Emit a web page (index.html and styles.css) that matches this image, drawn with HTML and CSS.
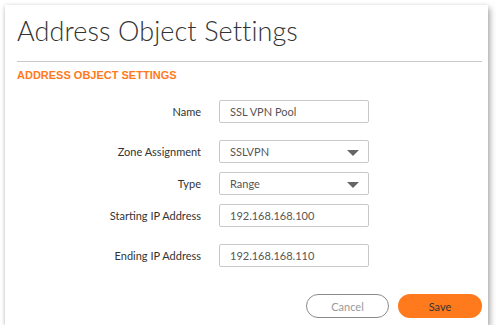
FILE: index.html
```html
<!DOCTYPE html>
<html>
  <head>
    <meta charset="UTF-8" />
    <title>Address Object Settings</title>
    <link rel="stylesheet" href="styles.css">
  </head>
  <body>
    <div class="dialog">
      <h1 class="title">Address Object Settings</h1>
      <hr class="divider" />
      <h3 class="section">ADDRESS OBJECT SETTINGS</h3>

      <div class="form">
        <div class="row">
          <label>Name</label>
          <div class="field">SSL VPN Pool</div>
        </div>
        <div class="row gap-lg">
          <label>Zone Assignment</label>
          <div class="field select">SSLVPN<span class="caret"></span></div>
        </div>
        <div class="row">
          <label>Type</label>
          <div class="field select">Range<span class="caret"></span></div>
        </div>
        <div class="row">
          <label>Starting IP Address</label>
          <div class="field">192.168.168.100</div>
        </div>
        <div class="row gap-lg">
          <label>Ending IP Address</label>
          <div class="field">192.168.168.110</div>
        </div>
      </div>

      <div class="buttons">
        <button class="btn cancel">Cancel</button>
        <button class="btn save">Save</button>
      </div>
    </div>
  </body>
</html>
```

FILE: styles.css
```css
* {
  padding: 0px;
  margin: 0px;
  box-sizing: border-box;
}

body {
  --orange: #ff7a1c;
  --text: #333333;
  --line: #c8c8c8;
  background: #ffffff;
  font-family: Lato, "Open Sans", Arial, sans-serif;
  color: var(--text);
}

.dialog {
  width: 483px;
  height: 320px;
  margin: 5px 0px 0px 5px;
  background: #ffffff;
  box-shadow: 2px 3px 6px rgba(0, 0, 0, 0.35), -1px 0px 3px rgba(0, 0, 0, 0.08);
  padding: 10px 6px 0px 12px;
}

.title {
  font-weight: 300;
  font-size: 27px;
  line-height: 32px;
  color: #333333;
  letter-spacing: 0.1px;
}

.divider {
  border: none;
  border-top: 1px solid var(--line);
  margin-top: 14px;
}

.section {
  font-family: "Liberation Sans", Arial, sans-serif;
  font-size: 11px;
  font-weight: 700;
  color: var(--orange);
  margin-top: 6px;
  line-height: 14px;
}

.form {
  display: flex;
  flex-direction: column;
  gap: 9px;
  margin-top: 18px;
}

.row {
  display: grid;
  grid-template-columns: 184px 150px;
  column-gap: 18px;
  align-items: center;
  height: 23px;
}

.row.gap-lg {
  margin-top: 8px;
}

.row label {
  text-align: right;
  font-size: 11px;
  line-height: 13px;
  color: #333333;
}

.field {
  height: 23px;
  border: 1px solid #c9c9c9;
  border-radius: 2px;
  font-size: 11px;
  color: #555555;
  padding-left: 10px;
  display: flex;
  align-items: center;
  position: relative;
}

.caret {
  position: absolute;
  right: 9px;
  top: 9px;
  width: 0px;
  height: 0px;
  border-left: 6px solid transparent;
  border-right: 6px solid transparent;
  border-top: 6px solid #666666;
}

.buttons {
  display: flex;
  justify-content: flex-end;
  gap: 9px;
  margin-top: 27px;
}

.btn {
  height: 24px;
  border-radius: 12px;
  font-family: Lato, "Open Sans", Arial, sans-serif;
  font-size: 11px;
}

.cancel {
  width: 83px;
  background: #ffffff;
  border: 1px solid #8a8a8a;
  color: #999999;
}

.save {
  width: 84px;
  background: var(--orange);
  border: none;
  color: #333333;
}
```
